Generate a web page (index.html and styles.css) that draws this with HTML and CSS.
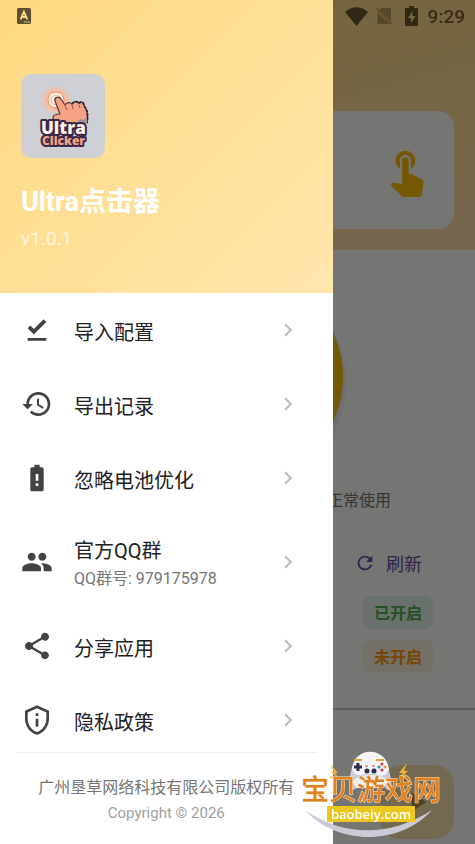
FILE: index.html
```html
<!DOCTYPE html>
<html lang="zh-CN">
<head>
    <meta charset="UTF-8">
    <meta name="viewport" content="width=device-width, initial-scale=1.0">
    <title>Ultra点击器</title>
    <link rel="stylesheet" href="styles.css">
</head>
<body>
    <!-- Home screen -->
    <main class="home">
        <header class="home-header">
            <div class="hero-card">
                <svg class="hero-icon" viewBox="0 0 24 24"><path d="M9 11.24V7.5C9 6.12 10.12 5 11.5 5S14 6.12 14 7.5v3.74c1.21-.81 2-2.18 2-3.74C16 5.01 13.99 3 11.5 3S7 5.01 7 7.5c0 1.56.79 2.93 2 3.74zm9.84 4.63l-4.54-2.26c-.17-.07-.35-.11-.54-.11H13v-6c0-.83-.67-1.5-1.5-1.5S10 6.67 10 7.5v10.74l-3.43-.72c-.08-.01-.15-.03-.24-.03-.31 0-.59.13-.79.33l-.79.8 4.94 4.94c.27.27.65.44 1.06.44h6.79c.75 0 1.33-.55 1.44-1.28l.75-5.27c.01-.07.02-.14.02-.2 0-.62-.38-1.16-.91-1.38z"/></svg>
            </div>
        </header>
        <section class="start">
            <div class="start-circle"></div>
            <p class="start-hint">正常使用</p>
        </section>
        <section class="status">
            <button type="button" class="refresh">
                <svg viewBox="0 0 24 24"><path d="M17.65 6.35C16.2 4.9 14.21 4 12 4c-4.42 0-7.99 3.58-7.99 8s3.57 8 7.99 8c3.73 0 6.84-2.55 7.73-6h-2.08c-.82 2.33-3.04 4-5.65 4-3.31 0-6-2.69-6-6s2.69-6 6-6c1.66 0 3.14.69 4.22 1.78L13 11h7V4l-2.35 2.35z"/></svg>
                刷新
            </button>
            <span class="tag tag-on">已开启</span>
            <span class="tag tag-off">未开启</span>
        </section>
        <div class="bottom">
            <button type="button" class="fab" aria-label="开始">
                <svg viewBox="0 0 24 24"><path d="M8 5v14l11-7z"/></svg>
            </button>
        </div>
    </main>

    <div class="scrim"></div>

    <!-- Side drawer -->
    <aside class="drawer">
        <header class="drawer-header">
            <svg class="logo" viewBox="0 0 84 84">
                <defs>
                    <radialGradient id="glow">
                        <stop offset="0" stop-color="#fff6e6"/>
                        <stop offset="0.55" stop-color="#ffb892"/>
                        <stop offset="1" stop-color="#ffb48c" stop-opacity="0"/>
                    </radialGradient>
                </defs>
                <rect width="84" height="84" fill="#cfd0d6"/>
                <circle cx="35" cy="26" r="15" fill="url(#glow)"/>
                <circle cx="35" cy="26" r="8" fill="#fff1dc" stroke="#e8926b"/>
                <circle cx="35" cy="26" r="5" fill="none" stroke="#f2b592"/>
                <path d="M34 27c-1-4 4-5 6-2l4 6c2-3 5-3 7-1 2-3 5-3 7-1 3-2 5 0 5 3 4 4 4 10 3 17l-8 4-15-2c-6-1-10-3-11-7 0-3 3-4 7-4z" fill="#f5a384" stroke="#57363a" stroke-width="1.2" stroke-linejoin="round"/>
                <path d="M51 30c2-3 5-3 7-1 3-2 5 0 5 3 4 4 4 10 3 17" fill="none" stroke="#2b2226" stroke-width="1.8" stroke-dasharray="3 1"/>
                <path d="M44 32l2 4M51 31l1 4M58 31l1 3" fill="none" stroke="#9a5548"/>
                <path d="M66 50v-6l-4 2-3-1-3 3-5 1-1 4z" fill="#a09596"/>
                <g class="logo-text">
                    <text x="20" y="60" class="logo-top">Ultra</text>
                    <text x="21" y="71" class="logo-bottom">Clicker</text>
                </g>
            </svg>
            <h1>Ultra点击器</h1>
            <p class="version">v1.0.1</p>
        </header>

        <nav class="menu">
            <a class="menu-item" href="#import">
                <svg class="menu-icon" viewBox="0 0 24 24"><path d="M5 18h14v2H5zM9.600 15.300L5 10.700l2-2 2.600 2.600L17 4l2 2z"/></svg>
                <span class="menu-label">导入配置</span>
                <svg class="chevron" viewBox="0 0 24 24"><path d="M10 6L8.59 7.41 13.17 12l-4.58 4.59L10 18l6-6z"/></svg>
            </a>
            <a class="menu-item" href="#export">
                <svg class="menu-icon" viewBox="0 0 24 24"><path d="M13 3c-4.97 0-9 4.03-9 9H1l3.89 3.89.07.14L9 12H6c0-3.87 3.13-7 7-7s7 3.13 7 7-3.13 7-7 7c-1.93 0-3.68-.79-4.94-2.06l-1.42 1.42C8.27 19.99 10.51 21 13 21c4.97 0 9-4.03 9-9s-4.03-9-9-9zm-1 5v5l4.28 2.54.72-1.21-3.5-2.08V8H12z"/></svg>
                <span class="menu-label">导出记录</span>
                <svg class="chevron" viewBox="0 0 24 24"><path d="M10 6L8.59 7.41 13.17 12l-4.58 4.59L10 18l6-6z"/></svg>
            </a>
            <a class="menu-item" href="#battery">
                <svg class="menu-icon" viewBox="0 0 24 24"><path d="M15.67 4H14V2h-4v2H8.33C7.6 4 7 4.6 7 5.33v15.33C7 21.4 7.6 22 8.33 22h7.33c.74 0 1.34-.6 1.34-1.33V5.33C17 4.6 16.4 4 15.67 4zM13 18h-2v-2h2v2zm0-4h-2V9h2v5z"/></svg>
                <span class="menu-label">忽略电池优化</span>
                <svg class="chevron" viewBox="0 0 24 24"><path d="M10 6L8.59 7.41 13.17 12l-4.58 4.59L10 18l6-6z"/></svg>
            </a>
            <a class="menu-item menu-item-tall" href="#group">
                <svg class="menu-icon" viewBox="0 0 24 24"><path d="M16 11c1.66 0 2.99-1.34 2.99-3S17.66 5 16 5c-1.66 0-3 1.34-3 3s1.34 3 3 3zm-8 0c1.66 0 2.99-1.34 2.99-3S9.66 5 8 5C6.34 5 5 6.34 5 8s1.34 3 3 3zm0 2c-2.33 0-7 1.17-7 3.5V19h14v-2.5c0-2.33-4.67-3.5-7-3.5zm8 0c-.29 0-.62.02-.97.05 1.16.84 1.97 1.97 1.97 3.45V19h6v-2.5c0-2.33-4.67-3.5-7-3.5z"/></svg>
                <span class="menu-label">官方QQ群<small>QQ群号: 979175978</small></span>
                <svg class="chevron" viewBox="0 0 24 24"><path d="M10 6L8.59 7.41 13.17 12l-4.58 4.59L10 18l6-6z"/></svg>
            </a>
            <a class="menu-item" href="#share">
                <svg class="menu-icon" viewBox="0 0 24 24"><path d="M18 16.08c-.76 0-1.44.3-1.96.77L8.91 12.7c.05-.23.09-.46.09-.7s-.04-.47-.09-.7l7.05-4.11c.54.5 1.25.81 2.04.81 1.66 0 3-1.34 3-3s-1.34-3-3-3-3 1.34-3 3c0 .24.04.47.09.7L8.04 9.81C7.5 9.31 6.79 9 6 9c-1.66 0-3 1.34-3 3s1.34 3 3 3c.79 0 1.5-.31 2.04-.81l7.12 4.16c-.05.21-.08.43-.08.65 0 1.61 1.31 2.92 2.92 2.92s2.92-1.31 2.92-2.92-1.31-2.92-2.92-2.92z"/></svg>
                <span class="menu-label">分享应用</span>
                <svg class="chevron" viewBox="0 0 24 24"><path d="M10 6L8.59 7.41 13.17 12l-4.58 4.59L10 18l6-6z"/></svg>
            </a>
            <a class="menu-item" href="#privacy">
                <svg class="menu-icon" viewBox="0 0 24 24"><path d="M12 1L3 5v6c0 5.55 3.84 10.74 9 12 5.16-1.26 9-6.45 9-12V5l-9-4zm7 10c0 4.52-2.98 8.69-7 9.93-4.02-1.24-7-5.41-7-9.93V6.3l7-3.11 7 3.11V11zm-8 0h2v6h-2zm0-4h2v2h-2z"/></svg>
                <span class="menu-label">隐私政策</span>
                <svg class="chevron" viewBox="0 0 24 24"><path d="M10 6L8.59 7.41 13.17 12l-4.58 4.59L10 18l6-6z"/></svg>
            </a>
        </nav>

        <footer class="drawer-footer">
            <p class="company">广州垦草网络科技有限公司版权所有</p>
            <p class="copyright">Copyright © 2026</p>
        </footer>
    </aside>

    <!-- System status bar -->
    <div class="status-bar">
        <svg class="app-badge" viewBox="0 0 14 16"><rect width="14" height="16" rx="1.5" fill="#5d502e"/><path d="M3.5 11.5L6.9 3.8l3.5 7.7M4.8 9h4.2" fill="none" stroke="#ffe08a" stroke-width="1.8"/><path d="M7 14h6" stroke="#ffe08a" stroke-dasharray="1.5 .6"/></svg>
        <svg class="wifi" viewBox="0 0 23 19"><path d="M0 5C7-1.500 16-1.500 23 5L11.500 19z"/></svg>
        <svg class="no-sim" viewBox="0 0 17 18"><path d="M5 1h10v13L3.500 3zM1.500 5L14 17H1.500z"/><path d="M.5 1.500l16 16" fill="none" stroke="#544626" stroke-width="1.2"/></svg>
        <svg class="battery" viewBox="0 0 13 20"><path fill-rule="evenodd" d="M4 0h5v2h4v18H0V2h4zM7.500 5L3 12h3v5l4.500-7H7.500z"/></svg>
        <time>9:29</time>
    </div>

    <!-- Site mark -->
    <div class="site-mark">
        <svg class="mark-art" viewBox="0 0 140 90">
            <path d="M4 59c38 27 86 27 127 0-32 36-95 36-127 0z" fill="#c9cad8"/>
            <path d="M48 38c0-15 3-26 10-31 7-6 15-6 22 0 7 5 10 16 11 31-3 3-7 0-10-6H60c-4 6-9 9-12 6z" fill="#c9cad8"/>
            <path d="M51 18c2-23 34-23 37 0-4 10-11 6-13 5h-11c-4 1-10 3-13-5z" fill="#f4f4f7"/>
            <path d="M51 31q6-8 19-7 13-1 17 7l-5 6H56z" fill="#ededf2"/>
            <path d="M53 9h8M75 9h8" stroke="#e0a23a" stroke-width="2"/>
            <path d="M53 16h8M57 12v8" stroke="#26304a" stroke-width="3"/>
            <g fill="#26304a"><circle cx="66" cy="20" r="2.500"/><circle cx="73" cy="20" r="2.500"/></g>
            <path d="M64 15h3M71 15h3" stroke="#d64646"/>
            <circle cx="81" cy="13" r="1.600" fill="#d64646"/><circle cx="81" cy="19" r="1.600" fill="#d64646"/>
            <circle cx="78" cy="16" r="1.600" fill="#2f9db0"/><circle cx="84" cy="16" r="1.600" fill="#e99530"/>
            <path d="M29 13l8 9h-3l5 7-9-8h3zM29 25l8 3-8-1zM106 12l-8 10h4l-5 7 10-9h-4zM98 27l7-4-1 3z" fill="#f0b432"/>
        </svg>
        <span class="mark-name">宝贝游戏网</span>
        <span class="mark-url">baobeiy.com</span>
    </div>
</body>
</html>
```
FILE: styles.css
```css
* {
    box-sizing: border-box;
}
body {
    margin: 0;
    font-family: Roboto, "Noto Sans CJK SC", sans-serif;
    color: #212121;
    background: #fff;
    overflow: hidden;
}
h1, p {
    margin: 0;
    font-weight: normal;
}
button {
    font-family: inherit;
    border: none;
    background: none;
    padding: 0;
    cursor: pointer;
}
svg {
    display: block;
    flex: none;
}

/* Home screen */
.home {
    min-height: 100vh;
    display: flex;
    flex-direction: column;
    background: #fffffb;
}
.home-header {
    padding: 111px 21px 21px;
    background: linear-gradient(165deg, #ffd980 0%, #ffdf97 60%, #ffdfb0 100%);
}
.hero-card {
    display: flex;
    justify-content: flex-end;
    align-items: center;
    height: 118px;
    padding: 0 21px;
    border-radius: 16px;
    background: #fffffb;
}
.hero-icon {
    width: 53px;
    height: 53px;
    fill: #ffc107;
}
.start {
    display: flex;
    flex-direction: column;
    align-items: center;
    padding-top: 21px;
}
.start-circle {
    width: 211px;
    height: 211px;
    border-radius: 50%;
    background: #ffc107;
    box-shadow: 2px 5px 4px #e8e8ea;
}
.start-hint {
    align-self: flex-end;
    padding-right: 84px;
    margin-top: 7px;
    font-size: 16px;
    line-height: 24px;
    color: #757575;
}
.status {
    display: flex;
    flex-direction: column;
    align-items: flex-end;
    gap: 11px;
    padding: 28px 42px 35px;
    border-bottom: 2px solid #cac4d0;
}
.refresh {
    display: flex;
    align-items: center;
    gap: 10px;
    height: 44px;
    padding-right: 11px;
    font-size: 18px;
    color: #6750a4;
}
.refresh svg {
    width: 22px;
    height: 22px;
    fill: #6750a4;
}
.tag {
    padding: 6px 11px 3px;
    border-radius: 8px;
    font-size: 16px;
    font-weight: bold;
    line-height: 24px;
}
.tag-on {
    color: #4caf50;
    background: #e8f5e9;
}
.tag-off {
    color: #ff9800;
    background: #fff3e0;
}
.bottom {
    display: flex;
    flex: 1;
    justify-content: flex-end;
    align-items: flex-end;
    padding: 0 21px 5px;
}
.fab {
    display: flex;
    align-items: center;
    justify-content: center;
    width: 74px;
    height: 74px;
    border-radius: 20px;
    background: #fbe5b0;
}
.fab svg {
    width: 32px;
    height: 32px;
    fill: #a88c3c;
}
.scrim {
    position: fixed;
    inset: 0;
    background: rgba(0, 0, 0, 0.54);
}

/* Drawer */
.drawer {
    position: fixed;
    top: 0;
    bottom: 0;
    left: 0;
    width: 70%;
    display: flex;
    flex-direction: column;
    background: #fff;
}
.drawer-header {
    padding: 74px 21px 40px;
    background: linear-gradient(135deg, #ffd980, #ffe6ad);
    color: #fff;
}
.logo {
    width: 84px;
    height: 84px;
    border-radius: 10px;
}
.logo-text {
    font-family: "Open Sans", sans-serif;
    font-weight: 800;
    stroke: #3b2548;
    stroke-width: 4px;
    stroke-linejoin: round;
    paint-order: stroke;
}
.logo-top {
    font-size: 17px;
    fill: #fff3e6;
}
.logo-bottom {
    font-size: 12px;
    fill: #f5a384;
}
.drawer-header h1 {
    margin-top: 26px;
    font-size: 27px;
    font-weight: bold;
    line-height: 36px;
}
.version {
    margin-top: 4px;
    font-size: 19px;
    line-height: 29px;
    opacity: 0.7;
}
.menu {
    flex: 1;
    overflow-y: auto;
    scrollbar-width: none;
}
.menu-item {
    display: flex;
    align-items: center;
    gap: 21px;
    height: 74px;
    padding: 0 32px 0 21px;
    color: inherit;
    text-decoration: none;
}
.menu-item-tall {
    height: 94px;
}
.menu-icon {
    width: 32px;
    height: 32px;
    fill: #424242;
}
.menu-label {
    flex: 1;
    padding-top: 5px;
    font-size: 20px;
    line-height: 28px;
}
.menu-label small {
    display: block;
    font-size: 16px;
    color: #757575;
}
.chevron {
    width: 26px;
    height: 26px;
    fill: #bdbdbd;
}
.drawer-footer {
    margin: 0 16px;
    padding: 22px 0 19px;
    border-top: 1px solid #eee;
    text-align: center;
}
.company {
    font-size: 16px;
    line-height: 26px;
    color: #757575;
    white-space: nowrap;
}
.copyright {
    font-size: 15px;
    line-height: 24px;
    color: #9e9e9e;
}

/* Status bar */
.status-bar {
    position: fixed;
    top: 0;
    left: 0;
    right: 0;
    display: flex;
    align-items: center;
    height: 32px;
    padding: 0 10px 0 17px;
    color: #352c18;
    fill: #302714;
}
.app-badge {
    width: 14px;
    height: 16px;
    margin-right: auto;
}
.wifi {
    width: 23px;
    height: 19px;
    margin-right: 8px;
}
.no-sim {
    width: 17px;
    height: 18px;
    margin-right: 12px;
    fill: #544626;
}
.battery {
    width: 13px;
    height: 20px;
    margin-right: 10px;
}
.status-bar time {
    font-size: 19px;
    font-weight: 500;
}

/* Site mark */
.site-mark {
    position: fixed;
    right: 34px;
    bottom: 3px;
    display: flex;
    flex-direction: column;
    align-items: center;
    width: 140px;
    height: 90px;
    padding-top: 24px;
}
.mark-art {
    position: absolute;
    top: 0;
    left: 0;
    width: 140px;
    height: 90px;
}
.mark-name {
    position: relative;
    font-size: 28px;
    font-weight: 500;
    line-height: 31px;
    color: #e0801f;
    -webkit-text-stroke: 1px #fbe3c4;
    paint-order: stroke;
    white-space: nowrap;
}
.mark-url {
    position: relative;
    padding: 0 4px;
    font-family: "Open Sans", sans-serif;
    font-size: 13px;
    font-weight: 600;
    line-height: 16px;
    color: #fff;
    background: #ecc81f;
}
```
